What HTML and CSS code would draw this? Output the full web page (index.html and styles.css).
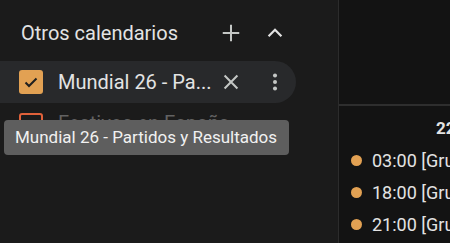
FILE: index.html
```html
<!DOCTYPE html>
<html lang="es">
<head>
  <meta charset="UTF-8">
  <meta name="viewport" content="width=device-width, initial-scale=1.0">
  <title>Otros calendarios</title>
  <link rel="stylesheet" href="styles.css">
</head>
<body>
  <div class="app">
    <aside class="sidebar">
      <div class="section-head">
        <span class="section-title">Otros calendarios</span>
        <button class="icon-btn plus" aria-label="Añadir">
          <svg width="22" height="22" viewBox="0 0 24 24"><path d="M12 3v18M3 12h18" stroke="#c4c7c5" stroke-width="2.2" fill="none"/></svg>
        </button>
        <button class="icon-btn" aria-label="Contraer">
          <svg width="22" height="22" viewBox="0 0 24 24"><path d="M5 15.5l7-7 7 7" stroke="#e3e3e3" stroke-width="2.4" fill="none"/></svg>
        </button>
      </div>

      <div class="cal-row active">
        <span class="check on">
          <svg width="16" height="16" viewBox="0 0 16 16"><path d="M2.5 8.5l3.5 3.5 7.5-7.5" stroke="#1f1f1f" stroke-width="2" fill="none"/></svg>
        </span>
        <span class="cal-name">Mundial 26 - Pa...</span>
        <button class="icon-btn close" aria-label="Quitar">
          <svg width="22" height="22" viewBox="0 0 24 24"><path d="M5 5l14 14M19 5L5 19" stroke="#c4c7c5" stroke-width="2.2" fill="none"/></svg>
        </button>
        <button class="icon-btn" aria-label="Opciones">
          <svg width="22" height="22" viewBox="0 0 24 24"><circle cx="12" cy="5" r="2.2" fill="#c4c7c5"/><circle cx="12" cy="12" r="2.2" fill="#c4c7c5"/><circle cx="12" cy="19" r="2.2" fill="#c4c7c5"/></svg>
        </button>
      </div>

      <div class="cal-row">
        <span class="check off"></span>
        <span class="cal-name muted">Festivos en España</span>
      </div>

      <div class="tooltip">Mundial 26 - Partidos y Resultados</div>
    </aside>

    <main class="agenda">
      <div class="agenda-top"></div>
      <div class="day">22 jun</div>
      <ul class="events">
        <li><span class="dot"></span>03:00 [Grupo A]</li>
        <li><span class="dot"></span>18:00 [Grupo B]</li>
        <li><span class="dot"></span>21:00 [Grupo C]</li>
      </ul>
    </main>
  </div>
</body>
</html>
```

FILE: styles.css
```css
body {
  margin: 0;
  padding: 0;
  background: #1b1b1b;
  font-family: 'Roboto', 'Open Sans', sans-serif;
  color: #e3e3e3;
  overflow: hidden;
}

.app {
  display: flex;
  height: 243px;
}

.sidebar {
  position: relative;
  width: 338px;
  flex-shrink: 0;
  background: #1b1b1b;
  border-right: 1px solid #2c2c2c;
}

.section-head {
  display: flex;
  align-items: center;
  height: 34px;
  margin-top: 16px;
  padding-left: 21px;
}

.section-title {
  font-size: 20px;
  width: 188px;
  color: #e3e3e3;
}

.icon-btn {
  display: flex;
  align-items: center;
  justify-content: center;
  width: 44px;
  height: 34px;
  padding: 0;
  background: none;
  border: none;
  flex-shrink: 0;
}

.cal-row {
  display: flex;
  align-items: center;
  height: 42px;
  width: 296px;
  margin-top: 11px;
  padding-left: 19px;
  box-sizing: border-box;
  border-radius: 0 21px 21px 0;
}

.cal-row.active {
  background: #28292b;
}

.cal-row + .cal-row {
  margin-top: 1px;
}

.check {
  width: 24px;
  height: 24px;
  border-radius: 3px;
  box-sizing: border-box;
  display: flex;
  align-items: center;
  justify-content: center;
  flex-shrink: 0;
}

.check.on {
  background: #e2a153;
}

.check.off {
  border: 2px solid #e0613a;
}

.cal-name {
  font-size: 20px;
  margin-left: 15px;
  width: 151px;
  flex-shrink: 0;
  white-space: nowrap;
  color: #e3e3e3;
}

.cal-name.muted {
  color: #626262;
  padding-bottom: 5px;
  width: auto;
}

.tooltip {
  position: absolute;
  left: 4px;
  top: 120px;
  width: 285px;
  height: 35px;
  box-sizing: border-box;
  padding-left: 11px;
  line-height: 35px;
  background: #5e5e5e;
  border-radius: 4px;
  font-size: 17px;
  color: #f1f1f1;
  white-space: nowrap;
}

.agenda {
  flex: 1;
  background: #131313;
  overflow: hidden;
}

.agenda-top {
  height: 104px;
  border-bottom: 2px solid #2e2e2e;
}

.day {
  padding: 12px 0 0 97px;
  font-size: 17px;
  font-weight: bold;
  color: #e3e3e3;
  white-space: nowrap;
  height: 26px;
}

.events {
  list-style: none;
  margin: 0;
  padding: 0 0 0 12px;
}

.events li {
  display: flex;
  align-items: center;
  height: 32px;
  font-size: 18px;
  white-space: nowrap;
  color: #e3e3e3;
}

.dot {
  width: 11px;
  height: 11px;
  border-radius: 50%;
  background: #e2a153;
  margin-right: 10px;
  flex-shrink: 0;
}
```
